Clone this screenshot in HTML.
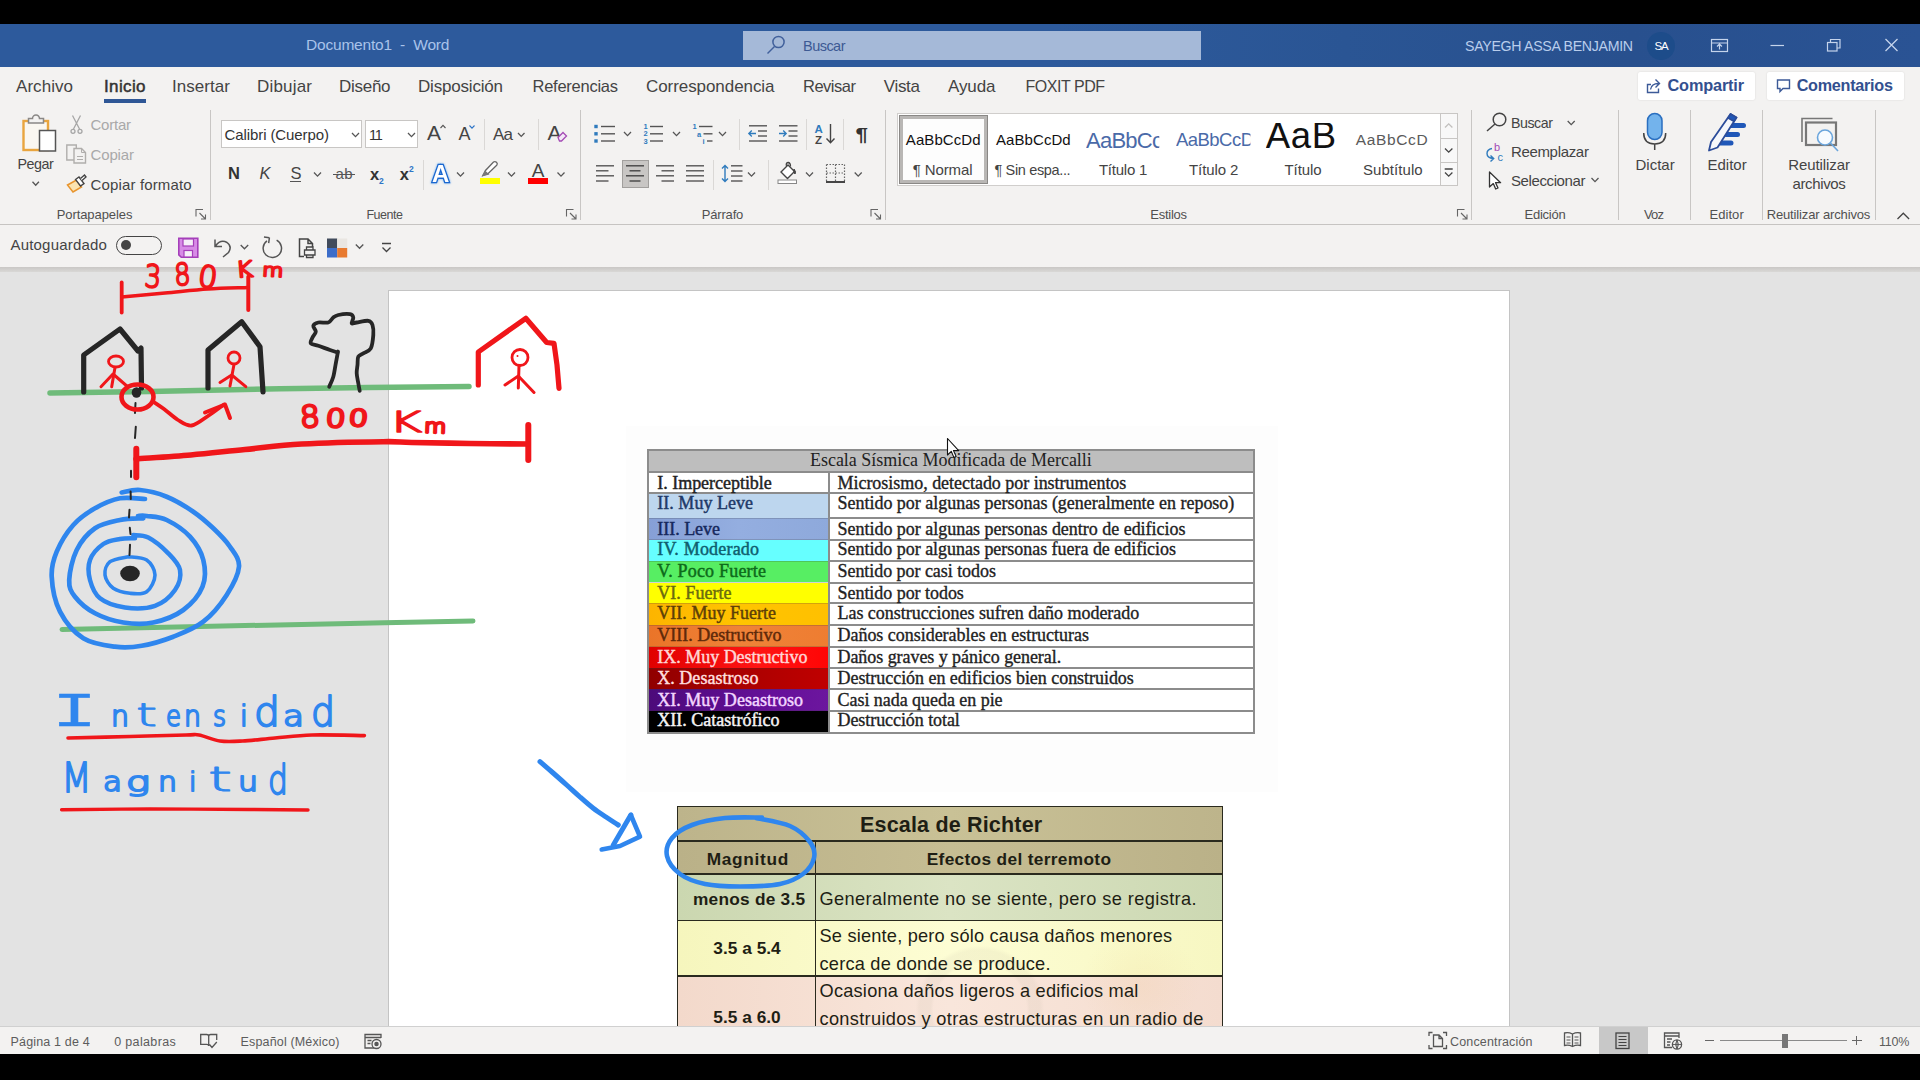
<!DOCTYPE html>
<html lang="es"><head><meta charset="utf-8"><title>Documento1 - Word</title>
<style>
html,body{margin:0;padding:0}
body{width:1920px;height:1080px;overflow:hidden;position:relative;background:#e3e3e3;font-family:"Liberation Sans",sans-serif;}
.b{position:absolute;}
.t{position:absolute;white-space:pre;line-height:1;}
svg.ov{position:absolute;left:0;top:0;}
svg.ink path,svg.ink ellipse{stroke-linecap:round;stroke-linejoin:round;}
</style></head>
<body>
<div class="b" style="left:0px;top:272px;width:1920px;height:755px;background:#e3e3e3;"></div>
<div class="b" style="left:388px;top:290px;width:1122px;height:746px;background:#fff;border:1px solid #c4c4c4;box-sizing:border-box;"></div>
<div class="b" style="left:626px;top:426px;width:652px;height:366px;background:#fdfdfd;"></div>
<div class="b" style="left:648px;top:449.5px;width:606px;height:22.5px;background:#bebebe;"></div>
<div class="b" style="left:828.5px;top:472px;width:425.5px;height:260.5px;background:#fff;"></div>
<div class="b" style="left:648px;top:472px;width:180.5px;height:20.69999999999999px;background:#ffffff;"></div>
<div class="b" style="left:648px;top:492.7px;width:180.5px;height:25.69999999999999px;background:#bdd6ee;"></div>
<div class="b" style="left:648px;top:518.4px;width:180.5px;height:21.399999999999977px;background:linear-gradient(90deg,#869fd6,#94aee0 50%,#8ea9db);"></div>
<div class="b" style="left:648px;top:539.8px;width:180.5px;height:21.300000000000068px;background:#66ffff;"></div>
<div class="b" style="left:648px;top:561.1px;width:180.5px;height:21.399999999999977px;background:#57ee63;"></div>
<div class="b" style="left:648px;top:582.5px;width:180.5px;height:20.799999999999955px;background:#ffff00;"></div>
<div class="b" style="left:648px;top:603.3px;width:180.5px;height:22.0px;background:linear-gradient(90deg,#fdb400,#ffc400 50%,#ffc000);"></div>
<div class="b" style="left:648px;top:625.3px;width:180.5px;height:21.40000000000009px;background:linear-gradient(90deg,#ea7428,#ef8238 50%,#ee7d31);"></div>
<div class="b" style="left:648px;top:646.7px;width:180.5px;height:21.399999999999977px;background:linear-gradient(90deg,#e00000,#ff1414 60%,#ff0505);"></div>
<div class="b" style="left:648px;top:668.1px;width:180.5px;height:21.299999999999955px;background:linear-gradient(90deg,#900000,#ae0000 60%,#c00000);"></div>
<div class="b" style="left:648px;top:689.4px;width:180.5px;height:21.399999999999977px;background:linear-gradient(90deg,#4c0a7a,#66109a 70%,#6c169e);"></div>
<div class="b" style="left:648px;top:710.8px;width:180.5px;height:21.700000000000045px;background:#000000;"></div>
<div class="b" style="left:648px;top:448.5px;width:606px;height:2px;background:#8c8c8c;"></div>
<div class="b" style="left:648px;top:471px;width:606px;height:2px;background:#8c8c8c;"></div>
<div class="b" style="left:648px;top:491.7px;width:606px;height:2px;background:#8c8c8c;"></div>
<div class="b" style="left:648px;top:731.5px;width:606px;height:2px;background:#8c8c8c;"></div>
<div class="b" style="left:828.5px;top:517.4px;width:425.5px;height:2px;background:#8c8c8c;"></div>
<div class="b" style="left:648px;top:517.9px;width:180.5px;height:1px;background:rgba(60,60,60,.22);"></div>
<div class="b" style="left:828.5px;top:538.8px;width:425.5px;height:2px;background:#8c8c8c;"></div>
<div class="b" style="left:648px;top:539.3px;width:180.5px;height:1px;background:rgba(60,60,60,.22);"></div>
<div class="b" style="left:828.5px;top:560.1px;width:425.5px;height:2px;background:#8c8c8c;"></div>
<div class="b" style="left:648px;top:560.6px;width:180.5px;height:1px;background:rgba(60,60,60,.22);"></div>
<div class="b" style="left:828.5px;top:581.5px;width:425.5px;height:2px;background:#8c8c8c;"></div>
<div class="b" style="left:648px;top:582.0px;width:180.5px;height:1px;background:rgba(60,60,60,.22);"></div>
<div class="b" style="left:828.5px;top:602.3px;width:425.5px;height:2px;background:#8c8c8c;"></div>
<div class="b" style="left:648px;top:602.8px;width:180.5px;height:1px;background:rgba(60,60,60,.22);"></div>
<div class="b" style="left:828.5px;top:624.3px;width:425.5px;height:2px;background:#8c8c8c;"></div>
<div class="b" style="left:648px;top:624.8px;width:180.5px;height:1px;background:rgba(60,60,60,.22);"></div>
<div class="b" style="left:828.5px;top:645.7px;width:425.5px;height:2px;background:#8c8c8c;"></div>
<div class="b" style="left:648px;top:646.2px;width:180.5px;height:1px;background:rgba(60,60,60,.22);"></div>
<div class="b" style="left:828.5px;top:667.1px;width:425.5px;height:2px;background:#8c8c8c;"></div>
<div class="b" style="left:648px;top:667.6px;width:180.5px;height:1px;background:rgba(60,60,60,.22);"></div>
<div class="b" style="left:828.5px;top:688.4px;width:425.5px;height:2px;background:#8c8c8c;"></div>
<div class="b" style="left:648px;top:688.9px;width:180.5px;height:1px;background:rgba(60,60,60,.22);"></div>
<div class="b" style="left:828.5px;top:709.8px;width:425.5px;height:2px;background:#8c8c8c;"></div>
<div class="b" style="left:648px;top:710.3px;width:180.5px;height:1px;background:rgba(60,60,60,.22);"></div>
<div class="b" style="left:647px;top:448.5px;width:2px;height:285.0px;background:#8c8c8c;"></div>
<div class="b" style="left:1253px;top:448.5px;width:2px;height:285.0px;background:#8c8c8c;"></div>
<div class="b" style="left:827.5px;top:472px;width:2px;height:260.5px;background:#8c8c8c;"></div>
<div class="b" style="left:677.5px;top:806.5px;width:545.2px;height:34.5px;background:linear-gradient(90deg,#bdb48b,#c9c196 50%,#bdb48b);"></div>
<div class="b" style="left:677.5px;top:841px;width:545.2px;height:33px;background:linear-gradient(90deg,#bab188,#c6bd93 50%,#bab188);"></div>
<div class="b" style="left:677.5px;top:874px;width:545.2px;height:46.60000000000002px;background:linear-gradient(90deg,#cbd7b0,#dbe4c4 50%,#ccd8b2);"></div>
<div class="b" style="left:677.5px;top:920.6px;width:545.2px;height:55.39999999999998px;background:linear-gradient(90deg,#f6f6bd,#fdfdd4 50%,#f7f7c2);"></div>
<div class="b" style="left:677.5px;top:976px;width:545.2px;height:51px;background:linear-gradient(90deg,#f3d9cb,#f9e6db 50%,#f4dccf);"></div>
<div class="b" style="left:905px;top:935px;width:150px;height:150px;background:radial-gradient(closest-side,rgba(200,190,170,0) 62%,rgba(190,180,160,.12) 66%,rgba(190,180,160,.12) 80%,rgba(200,190,170,0) 86%);border-radius:50%;"></div>
<div class="b" style="left:1080px;top:930px;width:120px;height:110px;background:radial-gradient(closest-side,rgba(235,190,120,.13),rgba(235,190,120,0));border-radius:50%;"></div>
<div class="b" style="left:676.7px;top:805.7px;width:546.8000000000001px;height:1.6px;background:#2a2a1e;"></div>
<div class="b" style="left:676.7px;top:840.2px;width:546.8000000000001px;height:1.6px;background:#2a2a1e;"></div>
<div class="b" style="left:676.7px;top:873.2px;width:546.8000000000001px;height:1.6px;background:#2a2a1e;"></div>
<div class="b" style="left:676.7px;top:919.8000000000001px;width:546.8000000000001px;height:1.6px;background:#2a2a1e;"></div>
<div class="b" style="left:676.7px;top:975.2px;width:546.8000000000001px;height:1.6px;background:#2a2a1e;"></div>
<div class="b" style="left:676.7px;top:806.5px;width:1.6px;height:220.5px;background:#2a2a1e;"></div>
<div class="b" style="left:1221.9px;top:806.5px;width:1.6px;height:220.5px;background:#2a2a1e;"></div>
<div class="b" style="left:814.7px;top:841px;width:1.6px;height:186px;background:#2a2a1e;"></div>
<div class="b" style="left:0px;top:0px;width:1920px;height:24px;background:#000;"></div>
<div class="b" style="left:0px;top:24px;width:1920px;height:43px;background:linear-gradient(90deg,#2d5a9c 0%,#2d5a9c 55%,#2a5594 70%,#28508e 85%,#2a5394 100%);"></div>
<div class="b" style="left:0px;top:67px;width:1920px;height:158px;background:#f3f2f1;"></div>
<div class="b" style="left:0px;top:224px;width:1920px;height:1px;background:#c6c4c2;"></div>
<div class="b" style="left:0px;top:225px;width:1920px;height:42px;background:#f3f2f1;"></div>
<div class="b" style="left:0px;top:267px;width:1920px;height:5px;background:linear-gradient(#c9c7c5,#d9d8d6);"></div>
<div class="b" style="left:0px;top:1026px;width:1920px;height:1px;background:#d0d0d0;"></div>
<div class="b" style="left:0px;top:1027px;width:1920px;height:27px;background:#f3f2f1;"></div>
<div class="b" style="left:0px;top:1054px;width:1920px;height:26px;background:#000;"></div>
<div class="b" style="left:743px;top:31px;width:458px;height:29px;background:#a5b9d8;"></div>
<div class="b" style="left:1647px;top:31.5px;width:28px;height:28px;background:#1d4c8a;border-radius:50%;"></div>
<div class="b" style="left:104px;top:98.8px;width:42px;height:4px;background:#2f5796;"></div>
<div class="b" style="left:1638px;top:72px;width:117px;height:28px;background:#fff;border-radius:2px;box-shadow:0 0 2px rgba(0,0,0,.12);"></div>
<div class="b" style="left:1767px;top:72px;width:137px;height:28px;background:#fff;border-radius:2px;box-shadow:0 0 2px rgba(0,0,0,.12);"></div>
<div class="b" style="left:210.0px;top:110px;width:1px;height:110px;background:#c8c6c4;"></div>
<div class="b" style="left:580.0px;top:110px;width:1px;height:110px;background:#c8c6c4;"></div>
<div class="b" style="left:885.0px;top:110px;width:1px;height:110px;background:#c8c6c4;"></div>
<div class="b" style="left:1471.0px;top:110px;width:1px;height:110px;background:#c8c6c4;"></div>
<div class="b" style="left:1618.0px;top:110px;width:1px;height:110px;background:#c8c6c4;"></div>
<div class="b" style="left:1690.0px;top:110px;width:1px;height:110px;background:#c8c6c4;"></div>
<div class="b" style="left:1762.0px;top:110px;width:1px;height:110px;background:#c8c6c4;"></div>
<div class="b" style="left:1875.0px;top:110px;width:1px;height:110px;background:#c8c6c4;"></div>
<div class="b" style="left:483.5px;top:119px;width:1px;height:31px;background:#dad8d6;"></div>
<div class="b" style="left:537.5px;top:119px;width:1px;height:31px;background:#dad8d6;"></div>
<div class="b" style="left:422.5px;top:160px;width:1px;height:30px;background:#dad8d6;"></div>
<div class="b" style="left:738.5px;top:119px;width:1px;height:31px;background:#dad8d6;"></div>
<div class="b" style="left:805.8px;top:119px;width:1px;height:31px;background:#dad8d6;"></div>
<div class="b" style="left:843.2px;top:119px;width:1px;height:31px;background:#dad8d6;"></div>
<div class="b" style="left:712.5px;top:160px;width:1px;height:30px;background:#dad8d6;"></div>
<div class="b" style="left:767.5px;top:160px;width:1px;height:30px;background:#dad8d6;"></div>
<div class="b" style="left:221px;top:120px;width:141px;height:28px;background:#fff;border:1px solid #c8c6c4;box-sizing:border-box;"></div>
<div class="b" style="left:365px;top:120px;width:53px;height:28px;background:#fff;border:1px solid #c8c6c4;box-sizing:border-box;"></div>
<div class="b" style="left:289.5px;top:180.7px;width:11px;height:1.3px;background:#555;"></div>
<div class="b" style="left:333px;top:174px;width:22px;height:1.3px;background:#555;"></div>
<div class="b" style="left:528px;top:178px;width:20px;height:6px;background:#ff0000;"></div>
<div class="b" style="left:479.7px;top:178px;width:20.5px;height:6px;background:#ffff00;"></div>
<div class="b" style="left:621.5px;top:160px;width:27px;height:28px;background:#c8c6c4;border:1px solid #a19f9d;box-sizing:border-box;"></div>
<div class="b" style="left:897px;top:113px;width:561px;height:73px;background:#fff;border:1px solid #d0cecc;box-sizing:border-box;"></div>
<div class="b" style="left:898.5px;top:114.5px;width:89px;height:69px;background:#fdfdfd;border:1px solid #8a8886;box-sizing:border-box;box-shadow:inset 0 0 0 3px #b9b7b5;"></div>
<div class="b" style="left:1439.5px;top:113px;width:18.5px;height:73px;background:#f8f8f8;border:1px solid #c8c6c4;box-sizing:border-box;"></div>
<div class="b" style="left:1439.5px;top:138px;width:18.5px;height:1px;background:#c8c6c4;"></div>
<div class="b" style="left:1439.5px;top:162px;width:18.5px;height:1px;background:#c8c6c4;"></div>
<div class="b" style="left:115.5px;top:235.5px;width:46.5px;height:19px;border:1.3px solid #444;box-sizing:border-box;border-radius:10px;"></div>
<div class="b" style="left:120.5px;top:240px;width:10px;height:10px;background:#444;border-radius:50%;"></div>
<div class="b" style="left:1598.7px;top:1027px;width:49.3px;height:27px;background:#c8c8c8;"></div>
<div class="b" style="left:1719.8px;top:1040.3px;width:127.5px;height:1px;background:#8a8a8a;"></div>
<div class="b" style="left:1782px;top:1034px;width:5.6px;height:14px;background:#777;"></div>
<div class="b" style="left:1704.6px;top:1040px;width:9.7px;height:1.2px;background:#666;"></div>
<div class="b" style="left:1852px;top:1040px;width:9.5px;height:1.2px;background:#666;"></div>
<div class="b" style="left:1856.1px;top:1035.8px;width:1.2px;height:9.6px;background:#666;"></div>
<span class="t" style="left:657.3px;top:474.00px;font-size:18px;color:#222;font-family:'Liberation Serif', serif;letter-spacing:-0.03px;-webkit-text-stroke:.45px #222;">I. Imperceptible</span>
<span class="t" style="left:837.5px;top:474.00px;font-size:18px;color:#222;font-family:'Liberation Serif', serif;letter-spacing:-0.03px;-webkit-text-stroke:.35px #222;">Microsismo, detectado por instrumentos</span>
<span class="t" style="left:657.3px;top:494.00px;font-size:18px;color:#1f3a68;font-family:'Liberation Serif', serif;letter-spacing:0.02px;-webkit-text-stroke:.45px #1f3a68;">II. Muy Leve</span>
<span class="t" style="left:837.5px;top:494.00px;font-size:18px;color:#222;font-family:'Liberation Serif', serif;letter-spacing:-0.02px;-webkit-text-stroke:.35px #222;">Sentido por algunas personas (generalmente en reposo)</span>
<span class="t" style="left:657.3px;top:520.00px;font-size:18px;color:#16285c;font-family:'Liberation Serif', serif;letter-spacing:-0.03px;-webkit-text-stroke:.45px #16285c;">III. Leve</span>
<span class="t" style="left:837.5px;top:520.00px;font-size:18px;color:#222;font-family:'Liberation Serif', serif;letter-spacing:-0.02px;-webkit-text-stroke:.35px #222;">Sentido por algunas personas dentro de edificios</span>
<span class="t" style="left:657.3px;top:540.00px;font-size:18px;color:#0f5e6e;font-family:'Liberation Serif', serif;letter-spacing:0.19px;-webkit-text-stroke:.45px #0f5e6e;">IV. Moderado</span>
<span class="t" style="left:837.5px;top:540.00px;font-size:18px;color:#222;font-family:'Liberation Serif', serif;letter-spacing:-0.03px;-webkit-text-stroke:.35px #222;">Sentido por algunas personas fuera de edificios</span>
<span class="t" style="left:657.3px;top:562.00px;font-size:18px;color:#0d6a1a;font-family:'Liberation Serif', serif;letter-spacing:0.19px;-webkit-text-stroke:.45px #0d6a1a;">V. Poco Fuerte</span>
<span class="t" style="left:837.5px;top:562.00px;font-size:18px;color:#222;font-family:'Liberation Serif', serif;letter-spacing:-0.05px;-webkit-text-stroke:.35px #222;">Sentido por casi todos</span>
<span class="t" style="left:657.3px;top:584.00px;font-size:18px;color:#6a6a10;font-family:'Liberation Serif', serif;letter-spacing:0.02px;-webkit-text-stroke:.45px #6a6a10;">VI. Fuerte</span>
<span class="t" style="left:837.5px;top:584.00px;font-size:18px;color:#222;font-family:'Liberation Serif', serif;letter-spacing:-0.04px;-webkit-text-stroke:.35px #222;">Sentido por todos</span>
<span class="t" style="left:657.3px;top:604.00px;font-size:18px;color:#5d3f08;font-family:'Liberation Serif', serif;letter-spacing:0.02px;-webkit-text-stroke:.45px #5d3f08;">VII. Muy Fuerte</span>
<span class="t" style="left:837.5px;top:604.00px;font-size:18px;color:#222;font-family:'Liberation Serif', serif;letter-spacing:-0.03px;-webkit-text-stroke:.35px #222;">Las construcciones sufren daño moderado</span>
<span class="t" style="left:657.3px;top:626.00px;font-size:18px;color:#5e290a;font-family:'Liberation Serif', serif;letter-spacing:0.01px;-webkit-text-stroke:.45px #5e290a;">VIII. Destructivo</span>
<span class="t" style="left:837.5px;top:626.00px;font-size:18px;color:#222;font-family:'Liberation Serif', serif;letter-spacing:-0.03px;-webkit-text-stroke:.35px #222;">Daños considerables en estructuras</span>
<span class="t" style="left:657.3px;top:648.00px;font-size:18px;color:#ffd6d6;font-family:'Liberation Serif', serif;letter-spacing:-0.02px;-webkit-text-stroke:.45px #ffd6d6;">IX. Muy Destructivo</span>
<span class="t" style="left:837.5px;top:648.00px;font-size:18px;color:#222;font-family:'Liberation Serif', serif;letter-spacing:-0.06px;-webkit-text-stroke:.35px #222;">Daños graves y pánico general.</span>
<span class="t" style="left:657.3px;top:669.00px;font-size:18px;color:#ffdede;font-family:'Liberation Serif', serif;letter-spacing:0.02px;-webkit-text-stroke:.45px #ffdede;">X. Desastroso</span>
<span class="t" style="left:837.5px;top:669.00px;font-size:18px;color:#222;font-family:'Liberation Serif', serif;letter-spacing:-0.04px;-webkit-text-stroke:.35px #222;">Destrucción en edificios bien construidos</span>
<span class="t" style="left:657.3px;top:691.00px;font-size:18px;color:#f3d6ff;font-family:'Liberation Serif', serif;letter-spacing:0.01px;-webkit-text-stroke:.45px #f3d6ff;">XI. Muy Desastroso</span>
<span class="t" style="left:837.5px;top:691.00px;font-size:18px;color:#222;font-family:'Liberation Serif', serif;letter-spacing:-0.04px;-webkit-text-stroke:.35px #222;">Casi nada queda en pie</span>
<span class="t" style="left:657.3px;top:711.00px;font-size:18px;color:#f5f5f5;font-family:'Liberation Serif', serif;letter-spacing:0.01px;-webkit-text-stroke:.45px #f5f5f5;">XII. Catastrófico</span>
<span class="t" style="left:837.5px;top:711.00px;font-size:18px;color:#222;font-family:'Liberation Serif', serif;letter-spacing:-0.07px;-webkit-text-stroke:.35px #222;">Destrucción total</span>
<span class="t" style="left:810.0px;top:451.00px;font-size:18px;color:#222;font-family:'Liberation Serif', serif;letter-spacing:-0.03px;">Escala Sísmica Modificada de Mercalli</span>
<span class="t" style="left:860.0px;top:815.00px;font-size:21.5px;color:#1e1e14;font-weight:700;letter-spacing:0.18px;">Escala de Richter</span>
<span class="t" style="left:706.7px;top:851.00px;font-size:17.3px;color:#1e1e14;font-weight:700;letter-spacing:0.69px;">Magnitud</span>
<span class="t" style="left:926.7px;top:851.00px;font-size:17.3px;color:#1e1e14;font-weight:700;letter-spacing:0.33px;">Efectos del terremoto</span>
<span class="t" style="left:693.0px;top:891.00px;font-size:17.3px;color:#1e1e14;font-weight:700;letter-spacing:0.23px;">menos de 3.5</span>
<span class="t" style="left:713.3px;top:940.00px;font-size:17.3px;color:#1e1e14;font-weight:700;letter-spacing:0.02px;">3.5 a 5.4</span>
<span class="t" style="left:713.3px;top:1009.00px;font-size:17.3px;color:#1e1e14;font-weight:700;letter-spacing:0.02px;">5.5 a 6.0</span>
<span class="t" style="left:819.5px;top:890.00px;font-size:18.2px;color:#1e1e14;letter-spacing:0.40px;">Generalmente no se siente, pero se registra.</span>
<span class="t" style="left:819.5px;top:927.00px;font-size:18.2px;color:#1e1e14;letter-spacing:0.20px;">Se siente, pero sólo causa daños menores</span>
<span class="t" style="left:819.5px;top:955.00px;font-size:18.2px;color:#1e1e14;letter-spacing:0.22px;">cerca de donde se produce.</span>
<span class="t" style="left:819.5px;top:982.00px;font-size:18.2px;color:#1e1e14;letter-spacing:0.23px;">Ocasiona daños ligeros a edificios mal</span>
<span class="t" style="left:819.5px;top:1010.00px;font-size:18.2px;color:#1e1e14;letter-spacing:0.33px;">construidos y otras estructuras en un radio de</span>
<span class="t" style="left:306.0px;top:37.00px;font-size:15.5px;color:#a9c3ea;letter-spacing:-0.20px;">Documento1  -  Word</span>
<span class="t" style="left:803.0px;top:39.00px;font-size:14.5px;color:#3d5a94;letter-spacing:-0.53px;">Buscar</span>
<span class="t" style="left:1465.0px;top:39.00px;font-size:14.2px;color:#b9cdec;letter-spacing:-0.31px;">SAYEGH ASSA BENJAMIN</span>
<span class="t" style="left:1654.5px;top:41.00px;font-size:11.5px;color:#fff;letter-spacing:-1.14px;">SA</span>
<span class="t" style="left:16.0px;top:78.00px;font-size:17px;color:#444;letter-spacing:0.05px;">Archivo</span>
<span class="t" style="left:104.0px;top:78.00px;font-size:17px;color:#333;letter-spacing:0.36px;-webkit-text-stroke:.5px #333;">Inicio</span>
<span class="t" style="left:172.0px;top:78.00px;font-size:17px;color:#444;letter-spacing:0.05px;">Insertar</span>
<span class="t" style="left:257.0px;top:78.00px;font-size:17px;color:#444;letter-spacing:0.19px;">Dibujar</span>
<span class="t" style="left:339.0px;top:78.00px;font-size:17px;color:#444;letter-spacing:-0.28px;">Diseño</span>
<span class="t" style="left:418.0px;top:78.00px;font-size:17px;color:#444;letter-spacing:-0.19px;">Disposición</span>
<span class="t" style="left:532.5px;top:78.00px;font-size:16.5px;color:#444;letter-spacing:-0.25px;">Referencias</span>
<span class="t" style="left:646.0px;top:78.00px;font-size:17px;color:#444;letter-spacing:-0.07px;">Correspondencia</span>
<span class="t" style="left:803.0px;top:78.00px;font-size:16.5px;color:#444;letter-spacing:-0.49px;">Revisar</span>
<span class="t" style="left:883.7px;top:78.00px;font-size:17px;color:#444;letter-spacing:-0.30px;">Vista</span>
<span class="t" style="left:948.0px;top:78.00px;font-size:17px;color:#444;letter-spacing:-0.10px;">Ayuda</span>
<span class="t" style="left:1025.5px;top:79.00px;font-size:16px;color:#444;letter-spacing:-0.47px;">FOXIT PDF</span>
<span class="t" style="left:1667.5px;top:77.00px;font-size:16.3px;color:#33508f;font-weight:700;letter-spacing:-0.16px;">Compartir</span>
<span class="t" style="left:1796.7px;top:77.00px;font-size:16.2px;color:#33508f;font-weight:700;letter-spacing:-0.27px;">Comentarios</span>
<span class="t" style="left:56.7px;top:208.00px;font-size:13px;color:#505050;letter-spacing:-0.08px;">Portapapeles</span>
<span class="t" style="left:366.4px;top:209.00px;font-size:12.5px;color:#505050;letter-spacing:-0.46px;">Fuente</span>
<span class="t" style="left:701.7px;top:208.00px;font-size:13px;color:#505050;letter-spacing:-0.17px;">Párrafo</span>
<span class="t" style="left:1150.3px;top:208.00px;font-size:13px;color:#505050;letter-spacing:-0.27px;">Estilos</span>
<span class="t" style="left:1524.6px;top:208.00px;font-size:13px;color:#505050;letter-spacing:-0.26px;">Edición</span>
<span class="t" style="left:1644.0px;top:208.00px;font-size:13px;color:#505050;letter-spacing:-0.84px;">Voz</span>
<span class="t" style="left:1709.5px;top:208.00px;font-size:13px;color:#505050;letter-spacing:0.05px;">Editor</span>
<span class="t" style="left:1766.7px;top:208.00px;font-size:13px;color:#505050;letter-spacing:-0.14px;">Reutilizar archivos</span>
<span class="t" style="left:17.5px;top:157.00px;font-size:14.3px;color:#444;letter-spacing:-0.49px;">Pegar</span>
<span class="t" style="left:90.5px;top:117.00px;font-size:15px;color:#a9a9a9;letter-spacing:-0.24px;">Cortar</span>
<span class="t" style="left:90.5px;top:147.00px;font-size:15px;color:#a9a9a9;letter-spacing:-0.14px;">Copiar</span>
<span class="t" style="left:90.5px;top:177.00px;font-size:15px;color:#444;letter-spacing:0.15px;">Copiar formato</span>
<span class="t" style="left:224.5px;top:127.00px;font-size:15px;color:#333;letter-spacing:-0.09px;">Calibri (Cuerpo)</span>
<span class="t" style="left:369.0px;top:128.00px;font-size:14.5px;color:#333;letter-spacing:-1.36px;">11</span>
<span class="t" style="left:427.0px;top:122.00px;font-size:21px;color:#444;">A</span>
<span class="t" style="left:458.5px;top:125.00px;font-size:18px;color:#444;">A</span>
<span class="t" style="left:493.0px;top:126.00px;font-size:17px;color:#444;letter-spacing:-0.80px;">Aa</span>
<span class="t" style="left:547.5px;top:122.00px;font-size:21px;color:#444;">A</span>
<span class="t" style="left:228.0px;top:165.00px;font-size:16.5px;color:#333;font-weight:700;">N</span>
<span class="t" style="left:259.5px;top:165.00px;font-size:16.5px;color:#444;font-style:italic;">K</span>
<span class="t" style="left:290.5px;top:165.00px;font-size:16.5px;color:#444;">S</span>
<span class="t" style="left:335.5px;top:166.00px;font-size:15px;color:#555;letter-spacing:0.31px;">ab</span>
<span class="t" style="left:370.0px;top:166.00px;font-size:16.5px;color:#333;font-weight:700;">x</span>
<span class="t" style="left:379.0px;top:177.00px;font-size:8.5px;color:#2e75c7;font-weight:700;">2</span>
<span class="t" style="left:399.7px;top:166.00px;font-size:16.5px;color:#333;font-weight:700;">x</span>
<span class="t" style="left:409.0px;top:165.00px;font-size:8.5px;color:#2e75c7;font-weight:700;">2</span>
<span class="t" style="left:531.8px;top:161.00px;font-size:19px;color:#444;">A</span>
<span class="t" style="left:905.8px;top:132.00px;font-size:15px;color:#111;letter-spacing:0.09px;">AaBbCcDd</span>
<span class="t" style="left:912.7px;top:162.00px;font-size:15px;color:#444;letter-spacing:-0.11px;">¶ Normal</span>
<span class="t" style="left:996.0px;top:132.00px;font-size:15px;color:#111;letter-spacing:0.07px;">AaBbCcDd</span>
<span class="t" style="left:994.5px;top:163.00px;font-size:14.5px;color:#444;letter-spacing:-0.35px;">¶ Sin espa...</span>
<span class="t" style="left:1086.0px;top:130.00px;font-size:22px;color:#4a6aa8;letter-spacing:-0.74px;clip-path:inset(0 3px 0 0);">AaBbCc</span>
<span class="t" style="left:1098.9px;top:162.00px;font-size:15px;color:#444;letter-spacing:-0.22px;">Título 1</span>
<span class="t" style="left:1176.0px;top:131.00px;font-size:18.5px;color:#4a6aa8;letter-spacing:-0.54px;clip-path:inset(0 3px 0 0);">AaBbCcD</span>
<span class="t" style="left:1189.0px;top:162.00px;font-size:15px;color:#444;letter-spacing:-0.08px;">Título 2</span>
<span class="t" style="left:1265.7px;top:118.00px;font-size:36.5px;color:#111;letter-spacing:0.65px;clip-path:inset(5px 0 0 0);">AaB</span>
<span class="t" style="left:1284.5px;top:162.00px;font-size:15px;color:#444;letter-spacing:-0.08px;">Título</span>
<span class="t" style="left:1355.8px;top:132.00px;font-size:15.5px;color:#5a5a5a;letter-spacing:0.64px;">AaBbCcD</span>
<span class="t" style="left:1363.0px;top:162.00px;font-size:15px;color:#444;letter-spacing:0.05px;">Subtítulo</span>
<span class="t" style="left:1510.9px;top:116.00px;font-size:14.2px;color:#444;letter-spacing:-0.43px;">Buscar</span>
<span class="t" style="left:1510.9px;top:144.00px;font-size:15px;color:#444;letter-spacing:-0.32px;">Reemplazar</span>
<span class="t" style="left:1510.9px;top:173.00px;font-size:15px;color:#444;letter-spacing:-0.38px;">Seleccionar</span>
<span class="t" style="left:1635.5px;top:157.00px;font-size:15px;color:#444;letter-spacing:0.01px;">Dictar</span>
<span class="t" style="left:1707.5px;top:157.00px;font-size:15px;color:#444;letter-spacing:0.00px;">Editor</span>
<span class="t" style="left:1788.3px;top:157.00px;font-size:15px;color:#444;letter-spacing:-0.09px;">Reutilizar</span>
<span class="t" style="left:1792.5px;top:176.00px;font-size:15px;color:#444;letter-spacing:-0.37px;">archivos</span>
<span class="t" style="left:10.5px;top:237.00px;font-size:15px;color:#444;letter-spacing:0.19px;">Autoguardado</span>
<span class="t" style="left:10.5px;top:1036.00px;font-size:12.5px;color:#5c5c5c;letter-spacing:0.17px;">Página 1 de 4</span>
<span class="t" style="left:114.2px;top:1036.00px;font-size:12.5px;color:#5c5c5c;letter-spacing:0.35px;">0 palabras</span>
<span class="t" style="left:240.6px;top:1036.00px;font-size:12.5px;color:#5c5c5c;letter-spacing:0.15px;">Español (México)</span>
<span class="t" style="left:1450.0px;top:1036.00px;font-size:12.5px;color:#5c5c5c;letter-spacing:0.16px;">Concentración</span>
<span class="t" style="left:1879.0px;top:1036.00px;font-size:12.5px;color:#5c5c5c;letter-spacing:-0.25px;">110%</span>
<svg class="ov" width="1920" height="1080" viewBox="0 0 1920 1080">
<g fill="none" stroke="#41609b" stroke-width="1.5"><circle cx="778.5" cy="42" r="5.6"/><path d="M774.5 46.5 L767.5 53.5"/></g>
<g fill="none" stroke="#c5d4ec" stroke-width="1.2"><rect x="1711.5" y="39.5" width="16" height="12"/><path d="M1711.5 43 h16 M1719.5 49.5 v-5 M1717 46.5 l2.5 -2.5 l2.5 2.5"/></g>
<path d="M1770.5 45.5 h13.5" stroke="#c5d4ec" stroke-width="1.2"/>
<g fill="none" stroke="#c5d4ec" stroke-width="1.2"><rect x="1827.5" y="42.5" width="9.5" height="8.5"/><path d="M1830.5 42.5 v-3 h9.5 v8.5 h-3"/></g>
<path d="M1885.5 39 l12 12 M1897.5 39 l-12 12" stroke="#c5d4ec" stroke-width="1.3"/>
<g fill="none" stroke="#3c5a98" stroke-width="1.4"><path d="M1651 84.5 h-3.5 v8 h11 v-4"/><path d="M1650.5 89.5 q1 -6 8 -6 M1655.5 79.5 l4 4 l-4 4"/></g>
<path d="M1777.5 80 h12 v8.5 h-6.5 l-3 3 v-3 h-2.5 z" fill="none" stroke="#3c5a98" stroke-width="1.4"/>
<rect x="23.5" y="121" width="24.5" height="29" fill="#faf7f1" stroke="#e9a53f" stroke-width="2.4"/>
<path d="M28.5 123 v-4.5 h4 a3.5 3.5 0 0 1 7 0 h4 v4.5 z" fill="#f3f2f1" stroke="#8a8886" stroke-width="1.5"/>
<rect x="39.5" y="130.5" width="16" height="20.5" fill="#fff" stroke="#555" stroke-width="1.5"/>
<path d="M32.5 181.7 l3.2 3.6 l3.2 -3.6" fill="none" stroke="#555" stroke-width="1.3"/>
<g fill="none" stroke="#a6a6a6" stroke-width="1.3"><path d="M72.5 115.5 L79.5 129 M80.5 115.5 L73.5 129"/><circle cx="73" cy="131.3" r="2"/><circle cx="80" cy="131.3" r="2"/></g>
<g fill="#f3f2f1" stroke="#b0aeac" stroke-width="1.4"><path d="M66.8 145 h9.5 v15 h-9.5 z"/><path d="M74 148.5 h7.5 l4 4 v10.5 h-11.5 z"/><path d="M81.5 148.5 v4 h4 M77 156.5 h6 M77 159.5 h6" fill="none" stroke-width="1"/></g>
<path d="M67.5 185 l9 -5 l5 7 l-8.5 5 z" fill="#fbe3b0" stroke="#e8952f" stroke-width="1.5"/>
<path d="M75.5 179.5 l3.5 -2.5 l5 6.5 l-3.5 2.5 z" fill="#fff" stroke="#444" stroke-width="1.4"/>
<path d="M80.5 178.5 l4 -3.5 l1.5 2 l-4 3.5" fill="#fff" stroke="#444" stroke-width="1.4"/>
<path d="M196 216.5 v-7 h7 M199.5 213.0 l6 6 M205.5 214.5 v4.5 h-4.5" fill="none" stroke="#666" stroke-width="1.1"/>
<path d="M352 133 l3.5 3.6 l3.5 -3.6" fill="none" stroke="#555" stroke-width="1.3"/>
<path d="M408 133 l3.5 3.6 l3.5 -3.6" fill="none" stroke="#555" stroke-width="1.3"/>
<path d="M440.5 128 l2.5 -2.6 l2.5 2.6" fill="none" stroke="#555" stroke-width="1.1"/>
<path d="M469.5 125.5 l2.5 2.6 l2.5 -2.6" fill="none" stroke="#2e75c7" stroke-width="1.1"/>
<path d="M518 133 l3.25 3.4 l3.25 -3.4" fill="none" stroke="#555" stroke-width="1.3"/>
<path d="M558 137.5 l5 -5 l3.5 3.5 l-5 5 h-2 z" fill="#f3e8f7" stroke="#a44bb5" stroke-width="1.3"/>
<path d="M314 172.5 l3.5 3.6 l3.5 -3.6" fill="none" stroke="#555" stroke-width="1.3"/>
<text x="432" y="181.5" font-family="Liberation Sans, sans-serif" font-size="24" font-weight="700" fill="#ffffff" stroke="#1b67cf" stroke-width="2.6" paint-order="stroke" style="filter:drop-shadow(0 0 1px #6fb0f0)">A</text>
<path d="M457 172.5 l3.5 3.6 l3.5 -3.6" fill="none" stroke="#555" stroke-width="1.3"/>
<path d="M483 175.5 l2.5 -5 l8 -8.5 q1.5 -1 3 .2 q1.5 1.6 .2 3 l-8.5 8.3 z" fill="#fff" stroke="#666" stroke-width="1.3"/><path d="M481.5 176.5 l3.5 -6 l4.5 4 z" fill="#777"/>
<path d="M508 172.5 l3.5 3.6 l3.5 -3.6" fill="none" stroke="#555" stroke-width="1.3"/>
<path d="M557.5 172.5 l3.5 3.6 l3.5 -3.6" fill="none" stroke="#555" stroke-width="1.3"/>
<path d="M566.5 216.5 v-7 h7 M570.0 213.0 l6 6 M576.0 214.5 v4.5 h-4.5" fill="none" stroke="#666" stroke-width="1.1"/>
<rect x="594.3" y="124.8" width="3.4" height="3.4" fill="#2f7bbd"/>
<rect x="594.3" y="132.10000000000002" width="3.4" height="3.4" fill="#2f7bbd"/>
<rect x="594.3" y="139.3" width="3.4" height="3.4" fill="#2f7bbd"/>
<path d="M601 126.5 H615" stroke="#555" stroke-width="1.4"/>
<path d="M601 133.8 H615" stroke="#555" stroke-width="1.4"/>
<path d="M601 141 H615" stroke="#555" stroke-width="1.4"/>
<path d="M624 132 l3.5 3.6 l3.5 -3.6" fill="none" stroke="#555" stroke-width="1.3"/>
<text x="643.5" y="129" font-family="Liberation Sans, sans-serif" font-size="7.5" font-weight="700" fill="#2f7bbd">1</text>
<text x="643.5" y="136.3" font-family="Liberation Sans, sans-serif" font-size="7.5" font-weight="700" fill="#2f7bbd">2</text>
<text x="643.5" y="143.6" font-family="Liberation Sans, sans-serif" font-size="7.5" font-weight="700" fill="#2f7bbd">3</text>
<path d="M650 126.5 H663" stroke="#555" stroke-width="1.4"/>
<path d="M650 133.8 H663" stroke="#555" stroke-width="1.4"/>
<path d="M650 141 H663" stroke="#555" stroke-width="1.4"/>
<path d="M673 132 l3.5 3.6 l3.5 -3.6" fill="none" stroke="#555" stroke-width="1.3"/>
<text x="692.5" y="129" font-family="Liberation Sans, sans-serif" font-size="7.5" font-weight="700" fill="#2f7bbd">1</text>
<text x="697" y="136.5" font-family="Liberation Sans, sans-serif" font-size="7.5" font-weight="700" fill="#2f7bbd">a</text>
<text x="702.5" y="144" font-family="Liberation Sans, sans-serif" font-size="7.5" font-weight="700" fill="#2f7bbd">i</text>
<path d="M699 126.5 H712.5" stroke="#555" stroke-width="1.4"/>
<path d="M703.5 133.8 H712.5" stroke="#555" stroke-width="1.4"/>
<path d="M707 141 H712.5" stroke="#555" stroke-width="1.4"/>
<path d="M719 132 l3.5 3.6 l3.5 -3.6" fill="none" stroke="#555" stroke-width="1.3"/>
<path d="M749 125.8 H767" stroke="#555" stroke-width="1.4"/>
<path d="M749 141 H767" stroke="#555" stroke-width="1.4"/>
<path d="M758 131 H767" stroke="#555" stroke-width="1.4"/>
<path d="M758 136 H767" stroke="#555" stroke-width="1.4"/>
<path d="M756 133.5 h-7 M751.8 130.5 l-3 3 l3 3" fill="none" stroke="#2f7bbd" stroke-width="1.3"/>
<path d="M779 125.8 H797.5" stroke="#555" stroke-width="1.4"/>
<path d="M779 141 H797.5" stroke="#555" stroke-width="1.4"/>
<path d="M788.5 131 H797.5" stroke="#555" stroke-width="1.4"/>
<path d="M788.5 136 H797.5" stroke="#555" stroke-width="1.4"/>
<path d="M779 133.5 h7 M783.2 130.5 l3 3 l-3 3" fill="none" stroke="#2f7bbd" stroke-width="1.3"/>
<text x="814.5" y="132.5" font-family="Liberation Sans, sans-serif" font-size="11.5" font-weight="700" fill="#2f7bbd">A</text>
<text x="815" y="143.5" font-family="Liberation Sans, sans-serif" font-size="11.5" font-weight="700" fill="#444">Z</text>
<path d="M830.5 124 v18.5 M826.5 138.5 l4 4.2 l4 -4.2" fill="none" stroke="#444" stroke-width="1.4"/>
<text x="855.5" y="140.5" font-family="Liberation Sans, sans-serif" font-size="18.5" font-weight="700" fill="#333" textLength="12.5" lengthAdjust="spacingAndGlyphs">¶</text>
<path d="M596 165.8 H614" stroke="#555" stroke-width="1.4"/>
<path d="M596 175.8 H614" stroke="#555" stroke-width="1.4"/>
<path d="M596 170.8 H608.5" stroke="#555" stroke-width="1.4"/>
<path d="M596 181 H608.5" stroke="#555" stroke-width="1.4"/>
<path d="M626 165.8 H644" stroke="#444" stroke-width="1.4"/>
<path d="M626 175.8 H644" stroke="#444" stroke-width="1.4"/>
<path d="M629.5 170.8 H640.5" stroke="#444" stroke-width="1.4"/>
<path d="M629.5 181 H640.5" stroke="#444" stroke-width="1.4"/>
<path d="M656 165.8 H674" stroke="#555" stroke-width="1.4"/>
<path d="M656 175.8 H674" stroke="#555" stroke-width="1.4"/>
<path d="M661.5 170.8 H674" stroke="#555" stroke-width="1.4"/>
<path d="M661.5 181 H674" stroke="#555" stroke-width="1.4"/>
<path d="M686 165.8 H704" stroke="#555" stroke-width="1.4"/>
<path d="M686 170.8 H704" stroke="#555" stroke-width="1.4"/>
<path d="M686 175.8 H704" stroke="#555" stroke-width="1.4"/>
<path d="M686 181 H704" stroke="#555" stroke-width="1.4"/>
<path d="M731 165.8 H742.5" stroke="#555" stroke-width="1.4"/>
<path d="M731 171 H742.5" stroke="#555" stroke-width="1.4"/>
<path d="M731 176 H742.5" stroke="#555" stroke-width="1.4"/>
<path d="M731 181 H742.5" stroke="#555" stroke-width="1.4"/>
<path d="M725 165.5 v16 M722 168.5 l3 -3 l3 3 M722 178.5 l3 3 l3 -3" fill="none" stroke="#2f7bbd" stroke-width="1.4"/>
<path d="M748 172.5 l3.5 3.6 l3.5 -3.6" fill="none" stroke="#555" stroke-width="1.3"/>
<path d="M781 172 l7 -7 l6.5 6.5 l-7 7 z" fill="#fff" stroke="#444" stroke-width="1.4"/><path d="M786.5 166 q-1 -3.5 2 -3.5 q2 .5 2 4" fill="none" stroke="#444" stroke-width="1.3"/><path d="M794 169 q2.5 3 1 5 q-1.5 -1 -1 -5" fill="#444" stroke="#444"/>
<rect x="778" y="180" width="18.5" height="3.5" fill="#fff" stroke="#888" stroke-width="1"/>
<path d="M806 172.5 l3.5 3.6 l3.5 -3.6" fill="none" stroke="#555" stroke-width="1.3"/>
<g fill="none" stroke="#666" stroke-width="1.2" stroke-dasharray="1.5 1.5"><path d="M826.5 164.5 h18 v17 M826.5 164.5 v17 M835.5 164.5 v17 M826.5 173 h18"/></g><path d="M826 182 h19" stroke="#333" stroke-width="1.8"/>
<path d="M854.7 172.5 l3.5 3.6 l3.5 -3.6" fill="none" stroke="#555" stroke-width="1.3"/>
<path d="M871 216.5 v-7 h7 M874.5 213.0 l6 6 M880.5 214.5 v4.5 h-4.5" fill="none" stroke="#666" stroke-width="1.1"/>
<path d="M1445 127.5 l3.7 -3.7 l3.7 3.7" fill="none" stroke="#c2c0be" stroke-width="1.3"/>
<path d="M1445 148.5 l3.7 3.7 l3.7 -3.7" fill="none" stroke="#444" stroke-width="1.3"/>
<path d="M1444.7 169 h8 M1445 172.5 l3.7 3.7 l3.7 -3.7" fill="none" stroke="#444" stroke-width="1.3"/>
<path d="M1457.5 216.5 v-7 h7 M1461.0 213.0 l6 6 M1467.0 214.5 v4.5 h-4.5" fill="none" stroke="#666" stroke-width="1.1"/>
<g fill="none" stroke="#444" stroke-width="1.5"><circle cx="1499.5" cy="119.5" r="6.3"/><path d="M1495 124 L1487 131"/></g>
<path d="M1567.7 121 l3.5 3.6 l3.5 -3.6" fill="none" stroke="#555" stroke-width="1.3"/>
<text x="1494" y="151" font-family="Liberation Sans, sans-serif" font-size="11" fill="#a44bb5">b</text><text x="1497.5" y="161" font-family="Liberation Sans, sans-serif" font-size="11" fill="#2f7bbd">c</text>
<path d="M1492 148.5 q-5 1 -5 5 q0 4.5 6.5 5 M1490.5 155.5 l3.2 3 l-3.2 3" fill="none" stroke="#2f7bbd" stroke-width="1.4"/>
<path d="M1489.5 172 v15 l3.8 -3.4 l2.4 5.4 l2.3 -1 l-2.4 -5.3 h5 z" fill="#fff" stroke="#333" stroke-width="1.3" stroke-linejoin="round"/>
<path d="M1591.5 178 l3.5 3.6 l3.5 -3.6" fill="none" stroke="#555" stroke-width="1.3"/>
<rect x="1647.5" y="113.5" width="14.5" height="26" rx="7.2" fill="#73b3ec" stroke="#2a6fc0" stroke-width="1.5"/>
<path d="M1643.7 133 q0 11 11 11 q11 0 11 -11 M1654.7 144 v6" fill="none" stroke="#444" stroke-width="1.5"/>
<g stroke="#1f57b8" stroke-width="5" stroke-linecap="round"><path d="M1730 125.5 h13.5 M1726 134.5 h11.5 M1720 143 h11"/></g>
<path d="M1730.5 114 l6 3.5 l-19 30 l-8.5 3 l2 -8.5 z" fill="#f5f7fb" stroke="#2b4c9a" stroke-width="1.8" stroke-linejoin="round"/><path d="M1730.5 114 l6 3.5 l-2.5 4 l-6 -3.5 z" fill="#1f57b8" stroke="#2b4c9a" stroke-width="1.5"/>
<g fill="none" stroke="#777" stroke-width="1.6"><path d="M1802 142 v-23.5 h30.5"/><rect x="1806" y="122.5" width="30" height="22.5" stroke-width="2.2"/></g>
<g fill="#f7fbff" stroke="#6aa5dc" stroke-width="1.6"><circle cx="1825" cy="137.5" r="7.5"/><path d="M1830.5 143 l7.5 8" fill="none"/></g>
<path d="M1897.5 219 l5.8 -5.8 l5.8 5.8" fill="none" stroke="#444" stroke-width="1.3"/>
<path d="M178.8 238.3 h19 v19 h-16.5 l-2.5 -2.5 z" fill="#d78be6" stroke="#a53fba" stroke-width="1.6"/><rect x="183" y="239" width="10.5" height="7" fill="#f6eef8" stroke="#a53fba" stroke-width="1.2"/><rect x="184" y="250.5" width="8.5" height="6.5" fill="#f6eef8" stroke="#a53fba" stroke-width="1.2"/>
<path d="M215 239.5 v7 h7 M215.5 246 q5 -7 11.5 -3.5 q5.5 4 1.5 10 l-5.5 4.5" fill="none" stroke="#555" stroke-width="1.5"/>
<path d="M240.7 245 l3.75 3.8 l3.75 -3.8" fill="none" stroke="#555" stroke-width="1.3"/>
<path d="M266 241.5 a9.2 9.2 0 1 0 9.5 -2 M268 238 h-5.5 M268 238 v5.5" fill="none" stroke="#555" stroke-width="1.5" transform="rotate(8 271 248)"/>
<path d="M304 256.5 h-4.5 v-17.5 h8.5 l4.5 4.5 v3.5 M308 239 v4.5 h4.500" fill="none" stroke="#444" stroke-width="1.5"/><path d="M304.500 250 h10.500 v5 h-10.500 z M306.500 250 v-3 h6.500 v3 M306.500 255 v2.500 h6.500 v-2.500" fill="#f3f2f1" stroke="#444" stroke-width="1.3"/>
<rect x="327" y="238.5" width="10.2" height="9.5" fill="#414b5c"/><rect x="337.2" y="238.5" width="10" height="9.5" fill="#e9e6e2"/><rect x="327" y="248" width="10.2" height="9.5" fill="#3c6dc9"/><rect x="337.2" y="248" width="10" height="9.5" fill="#e87a30"/>
<path d="M355.8 244.5 l3.75 3.8 l3.75 -3.8" fill="none" stroke="#555" stroke-width="1.3"/>
<path d="M382 243.5 h9 M382.500 247.500 l4 4 l4 -4" fill="none" stroke="#444" stroke-width="1.3"/>
<path d="M200.700 1034.500 h6 q2 0 2 2 v9.500 q0 -1.700 -2 -1.700 h-6 z M216.700 1040 v-5.500 h-6 q-2 0 -2 2 M209.500 1044.500 l2.500 3 l4.800 -5.500" fill="none" stroke="#555" stroke-width="1.3"/>
<g fill="none" stroke="#555" stroke-width="1.3"><path d="M374 1048 h-9 v-13.500 h16 v3.500 M365 1037.500 h16 M367.500 1040.500 h4 M367.500 1043.500 h3"/><circle cx="376.500" cy="1044" r="4.500"/><circle cx="376.500" cy="1044" r="1.600" fill="#555"/></g>
<g fill="none" stroke="#555" stroke-width="1.3"><path d="M1429 1036 v-3.500 h3.500 M1443 1032.500 h3.500 v3.500 M1446.500 1045 v3.500 h-3.500 M1432.500 1048.500 h-3.500 v-3.500"/><path d="M1433.500 1035 h5.500 l3.500 3.500 v8 h-9 z M1439 1035 v3.500 h3.500"/></g>
<g fill="none" stroke="#555" stroke-width="1.3"><path d="M1572.500 1034 v12.500 M1564.500 1033 q4 -1 8 1 q4 -2 8 -1 v12.500 q-4 -1 -8 1 q-4 -2 -8 -1 z"/><path d="M1566.500 1037 h4 M1566.500 1040 h4 M1566.500 1043 h4 M1574.500 1037 h4 M1574.500 1040 h4 M1574.500 1043 h4" stroke-width="1"/></g>
<g fill="none" stroke="#444" stroke-width="1.300"><rect x="1616" y="1033" width="13" height="15.500"/><path d="M1618.500 1036.500 h8 M1618.500 1039.500 h8 M1618.500 1042.500 h8 M1618.500 1045.500 h8" stroke-width="1"/></g>
<g fill="none" stroke="#555" stroke-width="1.300"><path d="M1672 1047.500 h-7.500 v-14.500 h14.500 v5 M1664.500 1036 h14.500 M1667 1039 h5 M1667 1042 h3.500 M1667 1045 h3"/><circle cx="1677" cy="1044.500" r="4.600"/><path d="M1672.400 1044.500 h9.200 M1677 1040 v9 M1677 1040 q-3 4.500 0 9 M1677 1040 q3 4.500 0 9" stroke-width=".9"/></g>
</svg>
<svg class="ov ink" width="1920" height="1080" viewBox="0 0 1920 1080">
<path d="M50.0 393.0 C66.7 392.8 108.3 392.2 150.0 391.5 C191.7 390.8 246.8 389.3 300.0 388.5 C353.2 387.7 440.8 386.8 469.0 386.5" fill="none" stroke="#6fbb7a" stroke-width="5.5" />
<path d="M62.0 629.5 C85.0 629.0 152.0 627.5 200.0 626.5 C248.0 625.5 304.5 624.4 350.0 623.5 C395.5 622.6 452.5 621.4 473.0 621.0" fill="none" stroke="#6fbb7a" stroke-width="5" />
<path d="M145.0 499.0 C140.8 498.9 128.3 496.8 120.0 498.3 C111.7 499.9 102.8 503.9 95.0 508.3 C87.2 512.8 79.7 517.8 73.3 525.0 C66.9 532.2 60.3 543.1 56.7 551.7 C53.1 560.3 51.2 566.7 51.7 576.7 C52.2 586.7 54.7 601.4 60.0 611.7 C65.3 622.0 74.1 632.5 83.3 638.3 C92.5 644.1 105.3 645.5 115.0 646.7 C124.7 648.0 132.0 647.5 141.7 645.8 C151.4 644.1 163.0 640.7 173.3 636.7 C183.6 632.7 194.4 628.7 203.3 621.7 C212.2 614.8 220.8 604.2 226.7 595.0 C232.6 585.8 238.4 574.8 239.0 566.7 C239.6 558.7 234.3 553.1 230.0 546.7 C225.7 540.3 219.4 534.1 213.3 528.3 C207.2 522.5 201.1 517.0 193.3 511.7 C185.5 506.4 175.6 500.3 166.7 496.7 C157.8 493.1 147.5 490.7 140.0 490.0 C132.5 489.3 124.8 492.1 121.7 492.5" fill="none" stroke="#2f86ee" stroke-width="4.7" />
<path d="M138.0 516.0 C139.4 516.0 141.9 515.3 146.7 516.0 C151.5 516.7 159.5 516.5 166.7 520.0 C173.9 523.5 183.9 530.0 190.0 536.7 C196.1 543.4 201.2 551.7 203.3 560.0 C205.4 568.3 205.8 578.4 202.5 586.7 C199.2 595.0 191.5 604.0 183.3 610.0 C175.1 616.0 163.3 620.4 153.3 622.5 C143.3 624.6 133.0 624.0 123.3 622.5 C113.6 621.0 103.0 617.6 95.0 613.3 C87.0 609.0 79.3 602.2 75.0 596.7 C70.7 591.2 68.9 587.8 69.2 580.0 C69.5 572.2 72.4 558.6 76.7 550.0 C81.0 541.4 87.8 533.3 95.0 528.3 C102.2 523.3 112.0 521.7 120.0 520.0 C128.1 518.3 139.4 518.6 143.3 518.3" fill="none" stroke="#2f86ee" stroke-width="4.7" />
<path d="M133.3 535.0 C135.8 535.4 142.5 534.5 148.3 537.5 C154.1 540.5 163.0 547.9 168.3 553.3 C173.6 558.7 178.9 563.9 180.0 570.0 C181.1 576.1 179.2 584.0 175.0 590.0 C170.8 596.0 163.3 602.9 155.0 605.8 C146.7 608.7 134.2 608.8 125.0 607.5 C115.8 606.2 105.8 602.9 100.0 598.3 C94.2 593.7 91.7 586.4 90.0 580.0 C88.3 573.6 87.8 566.0 90.0 560.0 C92.2 554.0 98.3 547.5 103.3 544.0 C108.3 540.5 114.7 540.0 120.0 539.0 C125.3 538.0 132.5 538.4 135.0 538.3" fill="none" stroke="#2f86ee" stroke-width="4.5" />
<path d="M128.3 556.7 C131.4 557.2 142.2 557.0 146.7 560.0 C151.1 563.0 155.0 569.7 155.0 575.0 C155.0 580.3 150.9 588.7 146.7 591.7 C142.5 594.8 135.6 593.9 130.0 593.3 C124.4 592.7 117.5 591.3 113.3 588.3 C109.1 585.2 105.5 579.4 105.0 575.0 C104.5 570.6 106.1 564.8 110.0 561.7 C113.9 558.7 125.3 557.5 128.3 556.7" fill="none" stroke="#2f86ee" stroke-width="3.6" />
<ellipse cx="130" cy="573.5" rx="9.8" ry="7.8" fill="#262626"/>
<path d="M135.5 403 L135 413" stroke="#262626" stroke-width="2"/>
<path d="M135.8 426.7 L135 438" stroke="#262626" stroke-width="2"/>
<path d="M131 470.8 L131 477" stroke="#262626" stroke-width="2"/>
<path d="M130.6 491.5 L130.8 499" stroke="#262626" stroke-width="2"/>
<path d="M129.5 509.7 L129 517.4" stroke="#262626" stroke-width="2"/>
<path d="M129.8 527.8 L130.5 534" stroke="#262626" stroke-width="2"/>
<path d="M130 544.7 L129.5 555" stroke="#262626" stroke-width="2"/>
<path d="M83.7 392 L83.7 355 L120 329 L138 351 L141 348 L141.5 388" fill="none" stroke="#262626" stroke-width="5.2"/>
<path d="M208 388 L208 350 L241.7 321.7 L260 346.7 L263 392" fill="none" stroke="#262626" stroke-width="5.2"/>
<path d="M337.5 352.5 C336.2 352.1 333.2 351.1 330.0 350.0 C326.8 348.9 321.5 346.9 318.3 345.8 C315.1 344.7 311.8 344.7 310.8 343.3 C309.8 341.9 311.7 339.4 312.5 337.5 C313.3 335.6 315.7 333.6 315.8 331.7 C315.9 329.8 312.9 327.3 313.3 325.8 C313.7 324.3 315.8 323.1 318.3 322.5 C320.8 321.9 325.8 323.3 328.3 322.5 C330.8 321.7 331.6 318.8 333.3 317.5 C335.0 316.2 335.5 315.6 338.3 315.0 C341.1 314.4 347.5 313.8 350.0 314.2 C352.5 314.6 353.0 316.0 353.3 317.5 C353.6 319.0 351.1 322.5 351.7 323.3 C352.3 324.1 353.9 322.9 356.7 322.5 C359.5 322.1 365.7 320.4 368.3 320.8 C370.9 321.2 371.7 322.6 372.5 325.0 C373.3 327.4 373.6 331.1 373.3 335.0 C373.0 338.9 372.5 345.2 370.8 348.3 C369.1 351.4 365.4 351.9 363.3 353.3 C361.2 354.7 359.3 354.8 358.3 356.7 C357.3 358.6 357.8 362.2 357.5 365.0 C357.2 367.8 356.6 370.2 356.7 373.3 C356.8 376.4 357.8 380.4 358.3 383.3 C358.8 386.2 359.5 389.6 359.7 390.8" fill="none" stroke="#262626" stroke-width="3.8" />
<path d="M338.0 351.5 C337.6 353.5 336.6 359.1 335.8 363.3 C335.0 367.5 334.4 372.8 333.3 376.7 C332.2 380.6 329.9 385.0 329.2 386.7" fill="none" stroke="#262626" stroke-width="3.8" />
<ellipse cx="116" cy="361.5" rx="7.5" ry="5.5" fill="none" stroke="#f0161a" stroke-width="2.8"/>
<path d="M115 367.5 L111.7 386.7" fill="none" stroke="#f0161a" stroke-width="3"/>
<path d="M101 386.7 L113 374 L128 387" fill="none" stroke="#f0161a" stroke-width="3"/>
<ellipse cx="234" cy="358" rx="6" ry="6" fill="none" stroke="#f0161a" stroke-width="2.8"/>
<path d="M234 364.5 L230 386" fill="none" stroke="#f0161a" stroke-width="3"/>
<path d="M220 382.5 L231.7 375 L245.8 386.7" fill="none" stroke="#f0161a" stroke-width="3"/>
<ellipse cx="520" cy="357.5" rx="8" ry="8" fill="none" stroke="#f0161a" stroke-width="2.8"/>
<path d="M519 366 L518.3 388" fill="none" stroke="#f0161a" stroke-width="3"/>
<path d="M505 385 L518.3 376 L534 392.5" fill="none" stroke="#f0161a" stroke-width="3"/>
<circle cx="517.500" cy="356" r="1" fill="#f0161a"/>
<ellipse cx="136.5" cy="392.5" rx="4.8" ry="5.200" fill="#262626"/>
<ellipse cx="137.5" cy="397" rx="16" ry="12.5" fill="none" stroke="#f0161a" stroke-width="4.6"/>
<path d="M153.0 401.5 C154.8 402.8 159.8 405.9 164.0 409.0 C168.2 412.1 173.4 417.2 178.0 420.0 C182.6 422.8 186.7 426.2 191.7 425.5 C196.7 424.8 202.6 419.5 208.0 416.0 C213.4 412.5 221.3 406.4 224.0 404.5" fill="none" stroke="#f0161a" stroke-width="3.8" />
<path d="M205 412.5 L225 404.5 L230 418" fill="none" stroke="#f0161a" stroke-width="4"/>
<path d="M121.7 282.5 L121.7 312.5" fill="none" stroke="#f0161a" stroke-width="3.8"/>
<path d="M248.3 276.7 L248.3 310" fill="none" stroke="#f0161a" stroke-width="4"/>
<path d="M121.7 297.0 C128.9 296.3 150.6 294.3 165.0 293.0 C179.4 291.7 194.2 289.9 208.0 289.0 C221.8 288.1 241.3 287.8 248.0 287.5" fill="none" stroke="#f0161a" stroke-width="3.6" />
<path d="M136.3 448.7 L136.3 477.3" fill="none" stroke="#f0161a" stroke-width="6"/>
<path d="M528.3 425 L528.3 460" fill="none" stroke="#f0161a" stroke-width="6"/>
<path d="M136.0 459.0 C145.1 458.3 172.6 456.6 190.8 455.0 C209.0 453.4 226.5 451.3 245.0 449.5 C263.5 447.7 278.7 445.3 301.7 444.0 C324.7 442.7 364.7 441.9 383.0 441.7 C401.3 441.4 397.2 442.2 411.7 442.5 C426.2 442.8 450.6 443.2 470.0 443.5 C489.4 443.8 518.3 443.9 528.0 444.0" fill="none" stroke="#f0161a" stroke-width="5.6" />
<path d="M478.3 385 L478.3 352 L525.8 318.3 L546.7 342.5 L554 343.3 L557 365 L559 388.3" fill="none" stroke="#f0161a" stroke-width="5.2"/>
<path d="M68.0 738.0 C78.3 737.8 110.3 737.0 130.0 736.5 C149.7 736.0 174.5 735.2 186.0 735.0 C197.5 734.8 193.3 734.0 199.0 735.0 C204.7 736.0 212.8 740.0 220.0 741.0 C227.2 742.0 233.3 741.5 242.5 741.0 C251.7 740.5 263.4 739.0 275.0 738.0 C286.6 737.0 297.1 735.4 312.0 735.0 C326.9 734.6 355.7 735.5 364.4 735.6" fill="none" stroke="#f0161a" stroke-width="3.6" />
<path d="M61.6 809.7 C76.3 809.6 118.6 809.0 150.0 809.0 C181.4 809.0 223.7 809.3 250.0 809.5 C276.3 809.7 298.3 809.9 308.0 810.0" fill="none" stroke="#f0161a" stroke-width="3.4" />
<path d="M540.0 761.7 C542.0 763.4 547.5 768.1 552.0 772.0 C556.5 775.9 562.0 780.8 566.7 785.0 C571.4 789.2 575.6 793.1 580.0 797.0 C584.4 800.9 589.0 805.0 593.3 808.3 C597.6 811.6 601.8 814.2 606.0 817.0 C610.2 819.8 616.2 823.7 618.3 825.0" fill="none" stroke="#2f86ee" stroke-width="5" />
<path d="M630.8 815 L640 836.7 L620 846 L601.7 849.5" fill="none" stroke="#2f86ee" stroke-width="4.6"/>
<path d="M630.8 815 L613.3 845" fill="none" stroke="#2f86ee" stroke-width="5"/>
<path d="M756.0 818.0 C761.7 819.3 781.0 822.0 790.0 826.0 C799.0 830.0 806.0 836.7 810.0 842.0 C814.0 847.3 815.2 852.7 814.0 858.0 C812.8 863.3 808.7 869.7 803.0 874.0 C797.3 878.3 790.5 881.9 780.0 884.0 C769.5 886.1 752.5 886.5 740.0 886.5 C727.5 886.5 715.0 886.1 705.0 884.0 C695.0 881.9 686.3 878.7 680.0 874.0 C673.7 869.3 668.3 862.0 667.0 856.0 C665.7 850.0 667.8 843.2 672.0 838.0 C676.2 832.8 683.2 828.3 692.0 825.0 C700.8 821.7 713.3 819.2 725.0 818.0 C736.7 816.8 755.8 817.6 762.0 817.5" fill="none" stroke="#2f86ee" stroke-width="4.6" />
<text font-family="DejaVu Sans, Liberation Sans, sans-serif" font-weight="200" fill="#f0161a" stroke="#f0161a" stroke-width="2.2" stroke-linejoin="round" xml:space="preserve"><tspan x="144" y="286.5" font-size="31" textLength="16.5" lengthAdjust="spacingAndGlyphs" rotate="4" >3</tspan><tspan x="175" y="285.5" font-size="30" textLength="16" lengthAdjust="spacingAndGlyphs" rotate="-4" >8</tspan><tspan x="197" y="286" font-size="30" textLength="19" lengthAdjust="spacingAndGlyphs" rotate="8" >0</tspan><tspan x="222" y="286" font-size="14" > </tspan><tspan x="236.5" y="277.5" font-size="22" textLength="17" lengthAdjust="spacingAndGlyphs" rotate="-4" >K</tspan><tspan x="262" y="276" font-size="18" textLength="21" lengthAdjust="spacingAndGlyphs" rotate="3" >m</tspan></text>
<text font-family="DejaVu Sans, Liberation Sans, sans-serif" font-weight="200" fill="#f0161a" stroke="#f0161a" stroke-width="2.6" stroke-linejoin="round" xml:space="preserve"><tspan x="300.5" y="427.5" font-size="30" textLength="20" lengthAdjust="spacingAndGlyphs" rotate="-3" >8</tspan><tspan x="325" y="426.5" font-size="25" textLength="20" lengthAdjust="spacingAndGlyphs" rotate="4" >0</tspan><tspan x="348" y="425.5" font-size="23" textLength="19.5" lengthAdjust="spacingAndGlyphs" rotate="4" >0</tspan><tspan x="372" y="426" font-size="14" > </tspan><tspan x="389" y="432" font-size="29" textLength="33" lengthAdjust="spacingAndGlyphs" stroke-width="1.5">K</tspan><tspan x="424" y="432.5" font-size="19" textLength="22" lengthAdjust="spacingAndGlyphs" rotate="2" >m</tspan></text>
<text font-family="DejaVu Sans, Liberation Sans, sans-serif" font-weight="200" fill="#2f86ee" stroke="#2f86ee" stroke-width="1.9" stroke-linejoin="round" xml:space="preserve"><tspan x="52" y="725.5" font-size="49" textLength="45" lengthAdjust="spacingAndGlyphs" font-family="Liberation Mono, DejaVu Sans Mono, monospace" font-weight="400" stroke-width=".4">I</tspan><tspan x="111" y="725.5" font-size="28" textLength="18" lengthAdjust="spacingAndGlyphs" >n</tspan><tspan x="136" y="725.5" font-size="32" textLength="21" lengthAdjust="spacingAndGlyphs" stroke-width="1">t</tspan><tspan x="166" y="725.5" font-size="28" textLength="15" lengthAdjust="spacingAndGlyphs" >e</tspan><tspan x="184" y="725.5" font-size="28" textLength="17" lengthAdjust="spacingAndGlyphs" >n</tspan><tspan x="213" y="725.5" font-size="28" textLength="13" lengthAdjust="spacingAndGlyphs" >s</tspan><tspan x="240" y="725.5" font-size="28" >i</tspan><tspan x="254" y="725.5" font-size="40" textLength="26" lengthAdjust="spacingAndGlyphs" >d</tspan><tspan x="283" y="725.5" font-size="28" textLength="21" lengthAdjust="spacingAndGlyphs" >a</tspan><tspan x="311" y="725.5" font-size="40" textLength="24" lengthAdjust="spacingAndGlyphs" >d</tspan></text>
<text font-family="DejaVu Sans, Liberation Sans, sans-serif" font-weight="200" fill="#2f86ee" stroke="#2f86ee" stroke-width="1.9" stroke-linejoin="round" xml:space="preserve"><tspan x="61.5" y="792" font-size="40" textLength="30" lengthAdjust="spacingAndGlyphs" >M</tspan><tspan x="103" y="791" font-size="27" textLength="19" lengthAdjust="spacingAndGlyphs" >a</tspan><tspan x="126" y="791" font-size="27" textLength="24" lengthAdjust="spacingAndGlyphs" >g</tspan><tspan x="158" y="791" font-size="27" textLength="19" lengthAdjust="spacingAndGlyphs" >n</tspan><tspan x="189" y="791" font-size="27" >i</tspan><tspan x="208" y="791" font-size="34" textLength="24" lengthAdjust="spacingAndGlyphs" stroke-width="1">t</tspan><tspan x="238" y="791" font-size="27" textLength="20" lengthAdjust="spacingAndGlyphs" >u</tspan><tspan x="268" y="794" font-size="41" textLength="20" lengthAdjust="spacingAndGlyphs" >d</tspan></text>
<path d="M947.5 438.5 v16.500 l3.800 -3.600 l2.600 6 l2.200 -1 l-2.600 -5.800 h5.200 z" fill="#fff" stroke="#111" stroke-width="1.100" stroke-linejoin="miter"/>
</svg>
</body></html>
